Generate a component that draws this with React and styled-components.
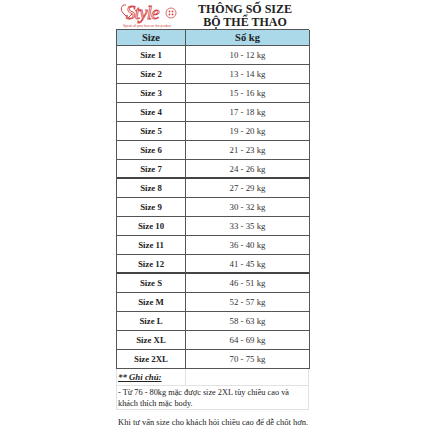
import React from "react";
import styled, { createGlobalStyle } from "styled-components";

const rows = [
  ["Size 1", "10 - 12 kg"],
  ["Size 2", "13 - 14 kg"],
  ["Size 3", "15 - 16 kg"],
  ["Size 4", "17 - 18 kg"],
  ["Size 5", "19 - 20 kg"],
  ["Size 6", "21 - 23 kg"],
  ["Size 7", "24 - 26 kg", true],
  ["Size 8", "27 - 29 kg"],
  ["Size 9", "30 - 32 kg"],
  ["Size 10", "33 - 35 kg"],
  ["Size 11", "36 - 40 kg"],
  ["Size 12", "41 - 45 kg", true],
  ["Size S", "46 - 51 kg"],
  ["Size M", "52 - 57 kg"],
  ["Size L", "58 - 63 kg"],
  ["Size XL", "64 - 69 kg"],
  ["Size 2XL", "70 - 75 kg"],
];

const Global = createGlobalStyle`
  html, body { margin: 0; padding: 0; background: #fff; }
  body { font-family: "Liberation Serif", "Times New Roman", serif; color: #222; }
`;

function Logo() {
  return (
    <svg width="60" height="28" viewBox="0 0 60 28">
      <path d="M7 4 C2 3 1 9 4 12 L9 17 L13 13" fill="none" stroke="#d64545" strokeWidth="1" />
      <text x="7" y="18" fontFamily="Liberation Serif, serif" fontStyle="italic" fontSize="19" fill="#fff" stroke="#d64545" strokeWidth="0.8" letterSpacing="-0.8">Style</text>
      <circle cx="52" cy="12" r="5" fill="none" stroke="#d64545" strokeWidth="0.8" />
      <circle cx="50.5" cy="10.5" r="0.9" fill="#d64545" />
      <circle cx="53.5" cy="10.5" r="0.9" fill="#d64545" />
      <circle cx="50.5" cy="13.5" r="0.9" fill="#d64545" />
      <circle cx="53.5" cy="13.5" r="0.9" fill="#d64545" />
      <text x="4" y="25.5" fontFamily="Liberation Sans, sans-serif" fontSize="3.2" fill="#c44">Speak all your love on the product</text>
    </svg>
  );
}

export default function App() {
  return (
    <>
      <Global />
      <Page>
        <Header>
          <LogoBox><Logo /></LogoBox>
          <Title>
            <div>THÔNG SỐ SIZE</div>
            <div>BỘ THỂ THAO</div>
          </Title>
        </Header>
        <Table>
          <HeadCell>Size</HeadCell>
          <HeadCell>Số kg</HeadCell>
          {rows.map(([s, kg, thick]) => (
            <React.Fragment key={s}>
              <SizeCell thick={thick}>{s}</SizeCell>
              <KgCell thick={thick}>{kg}</KgCell>
            </React.Fragment>
          ))}
        </Table>
        <NoteGrid>
          <NoteLabel><span>** Ghi chú:</span></NoteLabel>
          <NoteEmpty />
          <NoteBox>- Từ 76 - 80kg mặc được size 2XL tùy chiều cao và khách thích mặc body.</NoteBox>
        </NoteGrid>
        <Tip>Khi tư vấn size cho khách hỏi chiều cao để dễ chốt hơn.</Tip>
      </Page>
    </>
  );
}

const Page = styled.div`
  width: 193px;
  margin-left: 116px;
`;

const Header = styled.div`
  display: flex;
  height: 29px;
`;

const LogoBox = styled.div`
  width: 62px;
  padding-top: 1px;
  margin-left: 3px;
`;

const Title = styled.div`
  flex: 1;
  text-align: center;
  font-weight: bold;
  font-size: 12px;
  line-height: 13px;
  padding-top: 3px;
  color: #222;
`;

const Table = styled.div`
  display: grid;
  grid-template-columns: 69px 124px;
  border-top: 1px solid #555;
  border-left: 1px solid #555;
`;

const HeadCell = styled.div`
  height: 15px;
  background: #abd9e9;
  border-right: 1px solid #555;
  border-bottom: 1px solid #555;
  display: flex;
  align-items: center;
  justify-content: center;
  font-weight: bold;
  font-size: 10.5px;
`;

const Cell = styled.div`
  height: ${p => (p.thick ? "17px" : "18px")};
  border-right: 1px solid #555;
  border-bottom: ${p => (p.thick ? "2px solid #444" : "1px solid #555")};
  display: flex;
  align-items: center;
  justify-content: center;
  font-size: 8.8px;
`;

const SizeCell = styled(Cell)`
  font-weight: bold;
`;

const KgCell = styled(Cell)`
  color: #333;
`;

const NoteGrid = styled.div`
  display: grid;
  grid-template-columns: 69px 123px;
  border-left: 1px solid #e2e2e2;
`;

const NoteLabel = styled.div`
  height: 16px;
  border-right: 1px solid #e2e2e2;
  border-bottom: 1px solid #e2e2e2;
  display: flex;
  align-items: center;
  padding-left: 1px;
  font-size: 8.8px;
  font-weight: bold;
  font-style: italic;
  span { text-decoration: underline; }
`;

const NoteEmpty = styled.div`
  border-right: 1px solid #e2e2e2;
  border-bottom: 1px solid #e2e2e2;
`;

const NoteBox = styled.div`
  grid-column: 1 / 3;
  height: 22px;
  padding: 1px 6px 0 1px;
  border-right: 1px solid #e2e2e2;
  border-bottom: 1px solid #e2e2e2;
  font-size: 8.3px;
  line-height: 11px;
`;

const Tip = styled.div`
  margin-top: 7px;
  padding-left: 2px;
  font-size: 8.5px;
  white-space: nowrap;
`;
